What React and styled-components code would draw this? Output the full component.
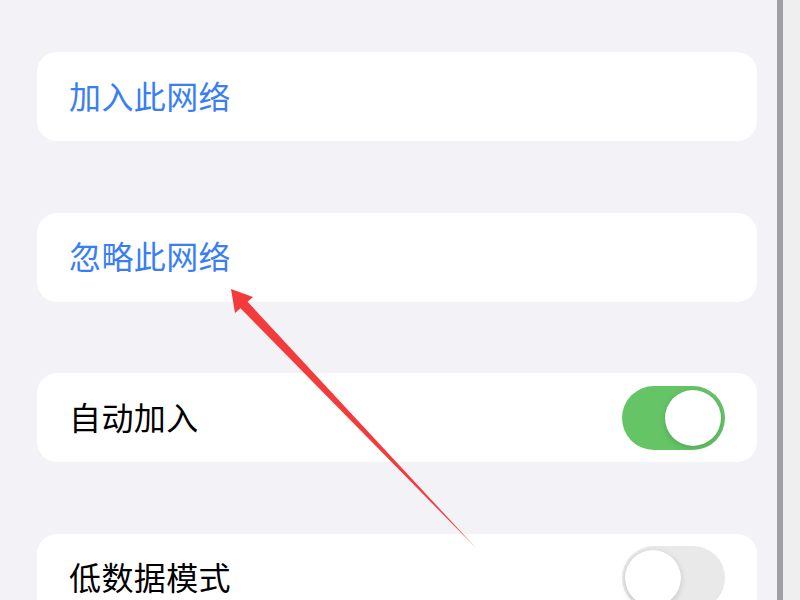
import styled, { createGlobalStyle } from "styled-components";

const GlobalStyle = createGlobalStyle`
  html, body {
    margin: 0;
    padding: 0;
    background: #efeff0;
  }
  body {
    font-family: "Noto Sans CJK SC", "Noto Sans", sans-serif;
  }
`;

const rows = [
  { label: "加入此网络", action: true },
  { label: "忽略此网络", action: true },
  { label: "自动加入", toggle: true, on: true },
  { label: "低数据模式", toggle: true, on: false },
];

const App = () => {
  return (
    <>
      <GlobalStyle />
      <Screen>
        <Settings>
          {rows.map((row) => (
            <Card key={row.label}>
              <Label $action={row.action}>{row.label}</Label>
              {row.toggle && (
                <Switch $on={row.on}>
                  <Knob $on={row.on} />
                </Switch>
              )}
            </Card>
          ))}
        </Settings>
        <Divider />
        <Gutter />
        <Arrow viewBox="0 0 800 600" width="800" height="600">
          <polygon
            points="231,289 253,297 247.6,301.8 477,549 240.4,308.2 235,313"
            fill="#f43b3b"
          />
        </Arrow>
      </Screen>
    </>
  );
};

const Screen = styled.div`
  position: relative;
  display: flex;
  width: 800px;
  height: 600px;
  overflow: hidden;
`;

const Settings = styled.div`
  width: 777px;
  box-sizing: border-box;
  padding: 52px 20px 0 37px;
  background: #f2f2f7;
  display: flex;
  flex-direction: column;
  gap: 71.5px;
`;

const Card = styled.div`
  flex-shrink: 0;
  height: 89px;
  background: #ffffff;
  border-radius: 20px;
  display: flex;
  align-items: center;
  justify-content: space-between;
  padding: 0 32px 0 32px;
`;

const Label = styled.span`
  font-size: 32px;
  line-height: 1;
  letter-spacing: 0.4px;
  margin-top: -4px;
  color: ${(p) => (p.$action ? "#3a7ef5" : "#000000")};
`;

const Switch = styled.div`
  position: relative;
  width: 103px;
  height: 64px;
  border-radius: 32px;
  background: ${(p) => (p.$on ? "#65c466" : "#e9e9ea")};
`;

const Knob = styled.div`
  position: absolute;
  top: 4px;
  left: ${(p) => (p.$on ? "43px" : "3px")};
  width: 56px;
  height: 56px;
  border-radius: 50%;
  background: #ffffff;
  box-shadow: 0 2px 6px rgba(0, 0, 0, 0.15), 0 0 1px rgba(0, 0, 0, 0.1);
`;

const Divider = styled.div`
  width: 6px;
  background: #a0a0a4;
`;

const Gutter = styled.div`
  flex: 1;
  background: #efefef;
`;

const Arrow = styled.svg`
  position: absolute;
  top: 0;
  left: 0;
  pointer-events: none;
`;

export default App;
